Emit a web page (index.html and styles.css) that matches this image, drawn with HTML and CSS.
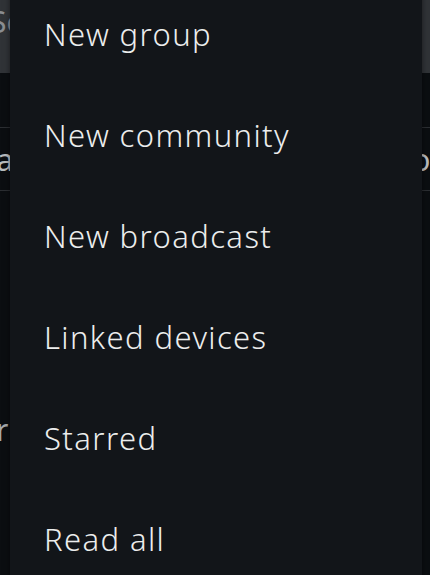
FILE: index.html
```html
<!DOCTYPE html>
<html lang="en">
<head>
    <meta charset="UTF-8">
    <meta name="viewport" content="width=device-width, initial-scale=1.0">
    <title>Menu</title>
    <link rel="stylesheet" href="styles.css">
</head>
<body>

    <!-- Screen behind the menu -->
    <div class="screen">
        <div class="search-bar">
            <span class="search-text">Search</span>
        </div>
        <div class="gap"></div>
        <div class="tabs">
            <span class="tab-left">Cha</span>
            <span class="tab-right">on</span>
        </div>
        <div class="chat-list">
            <span class="chat-letter">r</span>
        </div>
    </div>

    <!-- Overflow menu -->
    <div class="menu">
        <div class="menu-item">New group</div>
        <div class="menu-item">New community</div>
        <div class="menu-item">New broadcast</div>
        <div class="menu-item">Linked devices</div>
        <div class="menu-item">Starred</div>
        <div class="menu-item">Read all</div>
    </div>

</body>
</html>
```

FILE: styles.css
```css
html, body {
    margin: 0;
    padding: 0;
}

body {
    font-family: 'Noto Sans', sans-serif;
    background-color: #0b0e11;
    width: 430px;
    height: 575px;
    overflow: hidden;
    position: relative;
}

.screen {
    display: flex;
    flex-direction: column;
}

.search-bar {
    height: 73px;
    background-color: #303337;
    overflow: hidden;
    line-height: 44px;
}

.search-text {
    display: inline-block;
    margin-left: -10px;
    font-size: 30px;
    color: #8b8e92;
}

.gap {
    height: 54px;
}

.tabs {
    height: 62px;
    border-top: 1px solid #2b2e32;
    border-bottom: 1px solid #2b2e32;
    display: flex;
    justify-content: space-between;
    align-items: center;
    overflow: hidden;
    font-size: 30px;
    color: #b9bcbf;
}

.tab-left {
    margin-left: -41px;
}

.tab-right {
    margin-right: -19px;
}

.chat-list {
    padding-top: 218px;
    overflow: hidden;
    font-size: 30px;
    color: #a6a9ac;
}

.chat-letter {
    display: inline-block;
    margin-left: -4px;
}

/* Menu */
.menu {
    position: absolute;
    left: 10px;
    top: -17px;
    width: 412px;
    height: 620px;
    background-color: #121519;
    box-shadow: 0 0 6px rgba(0, 0, 0, 0.5);
}

.menu-item {
    height: 101px;
    display: flex;
    align-items: center;
    padding-left: 34px;
    font-size: 31px;
    font-weight: 300;
    color: #eceded;
    letter-spacing: 1.4px;
}
```
